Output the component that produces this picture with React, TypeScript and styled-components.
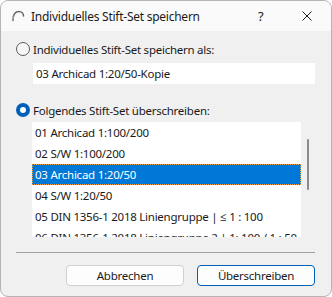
import React from 'react'
import styled, { createGlobalStyle, css } from 'styled-components'

const GlobalStyle = createGlobalStyle`
  html, body {
    margin: 0;
    padding: 0;
    background: #ffffff;
  }
  body {
    font-family: 'Noto Sans', 'Open Sans', sans-serif;
    font-size: 11.5px;
    letter-spacing: -0.25px;
    color: #1a1a1a;
  }
`

const items = [
  '01 Archicad 1:100/200',
  '02 S/W 1:100/200',
  '03 Archicad 1:20/50',
  '04 S/W 1:20/50',
  '05 DIN 1356-1 2018 Liniengruppe | ≤ 1 : 100',
  '06 DIN 1356-1 2018 Liniengruppe 2 | 1: 100 / 1 : 50',
]

const App: React.FC = () => {
  const selected = 2

  return (
    <>
      <GlobalStyle />
      <Window>
        <TitleBar>
          <AppIcon width="14" height="14" viewBox="0 0 14 14">
            <path
              d="M2 11.5 C2 5 5 2.5 8 2.5 C10.5 2.5 12.5 4.5 12.5 7"
              fill="none"
              stroke="#6b6b6b"
              strokeWidth="1.6"
              strokeLinecap="round"
            />
            <path d="M1.2 11.5 L1.6 7 L3.2 6.5 L2.8 11.5 Z" fill="#9a9a9a" />
          </AppIcon>
          <Title>Individuelles Stift-Set speichern</Title>
          <Help>?</Help>
          <Close width="10" height="10" viewBox="0 0 10 10">
            <path d="M0.5 0.5 L9.5 9.5 M9.5 0.5 L0.5 9.5" stroke="#1a1a1a" strokeWidth="1" />
          </Close>
        </TitleBar>

        <Content>
          <RadioRow>
            <Radio />
            <span>Individuelles Stift-Set speichern als:</span>
          </RadioRow>
          <NameField>03 Archicad 1:20/50-Kopie</NameField>

          <RadioRow $gap={19}>
            <Radio $checked />
            <span>Folgendes Stift-Set überschreiben:</span>
          </RadioRow>

          <ListArea>
            <ListBox>
              {items.map((item, i) => (
                <ListItem key={item} $selected={i === selected}>
                  {item}
                </ListItem>
              ))}
            </ListBox>
            <ScrollTrack>
              <Thumb />
            </ScrollTrack>
          </ListArea>

          <Separator />

          <Buttons>
            <Button>Abbrechen</Button>
            <Button $primary>Überschreiben</Button>
          </Buttons>
        </Content>
      </Window>
    </>
  )
}

export default App

const Window = styled.div`
  width: 332px;
  height: 297px;
  box-sizing: border-box;
  border: 1px solid #b4b4b4;
  border-radius: 8px;
  overflow: hidden;
  background: #f0f0f0;
  display: flex;
  flex-direction: column;
`

const TitleBar = styled.div`
  height: 30px;
  flex-shrink: 0;
  display: flex;
  align-items: center;
  padding-left: 10px;
  background: #fafafa;
`

const AppIcon = styled.svg`
  margin-top: -1px;
`

const Title = styled.div`
  margin-left: 6px;
  flex: 1;
  white-space: nowrap;
  font-size: 12px;
`

const Help = styled.div`
  width: 12px;
  margin-right: 32px;
  font-size: 13px;
`

const Close = styled.svg`
  margin-right: 19px;
`

const Content = styled.div`
  padding: 11px 16px 0 15px;
  display: flex;
  flex-direction: column;
`

const RadioRow = styled.div<{ $gap?: number }>`
  display: flex;
  align-items: center;
  gap: 3px;
  height: 14px;
  margin-top: ${(p) => p.$gap ?? 0}px;
  white-space: nowrap;
`

const Radio = styled.div<{ $checked?: boolean }>`
  width: 14px;
  height: 14px;
  box-sizing: border-box;
  border-radius: 50%;
  flex-shrink: 0;
  ${(p) =>
    p.$checked
      ? css`
          background: #ffffff;
          border: 4px solid #005fb8;
        `
      : css`
          background: #f6f6f6;
          border: 1px solid #5d5d5d;
        `}
`

const NameField = styled.div`
  margin: 7px 0 0 17px;
  height: 21px;
  line-height: 21px;
  padding-left: 3px;
  background: #ffffff;
  white-space: nowrap;
`

const ListArea = styled.div`
  margin: 5px 0 0 16px;
  height: 115px;
  display: flex;
`

const ListBox = styled.div`
  width: 269px;
  background: #ffffff;
  overflow: hidden;
`

const ListItem = styled.div<{ $selected?: boolean }>`
  height: 21px;
  line-height: 21px;
  padding-left: 3px;
  box-sizing: border-box;
  white-space: nowrap;
  ${(p) =>
    p.$selected &&
    css`
      background: #0078d7;
      color: #ffffff;
      border: 1px dotted #f0a040;
      line-height: 19px;
      padding-left: 2px;
    `}
`

const ScrollTrack = styled.div`
  flex: 1;
  padding-left: 6px;
`

const Thumb = styled.div`
  width: 2px;
  height: 51px;
  margin-top: 17px;
  background: #8a8a8a;
  border-radius: 1px;
`

const Separator = styled.div`
  margin-top: 15px;
  height: 1px;
  background: #a0a0a0;
`

const Buttons = styled.div`
  margin-top: 12px;
  display: flex;
  justify-content: flex-end;
  gap: 13px;
`

const Button = styled.div<{ $primary?: boolean }>`
  width: 118px;
  height: 21px;
  box-sizing: border-box;
  border-radius: 4px;
  display: flex;
  align-items: center;
  justify-content: center;
  background: #fdfdfd;
  border: 1px solid ${(p) => (p.$primary ? '#005fb8' : '#d0d0d0')};
`
